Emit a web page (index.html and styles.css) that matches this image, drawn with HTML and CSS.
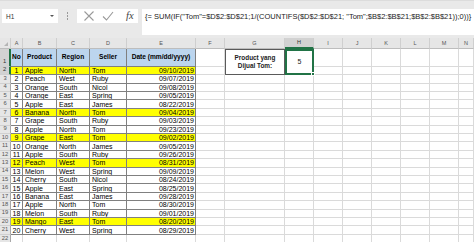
FILE: index.html
```html
<!DOCTYPE html>
<html>
<head>
<meta charset="utf-8">
<link rel="stylesheet" href="styles.css">
</head>
<body>
<div class="toolbar">
  <div class="namebox"><span>H1</span><span class="arrow"></span></div>
  <div class="sep"><span class="dot"></span><span class="dot"></span><span class="dot"></span></div>
  <div class="icons">
    <svg class="ico" width="12" height="12" viewBox="0 0 12 12"><path d="M1.5 1.5 L10.5 10.5 M10.5 1.5 L1.5 10.5" stroke="#9a9a9a" stroke-width="1.1" fill="none"/></svg>
    <svg class="ico" width="12" height="12" viewBox="0 0 12 12"><path d="M1 6.5 L4.5 10 L11 2" stroke="#9a9a9a" stroke-width="1.1" fill="none"/></svg>
    <span class="fx">fx</span>
  </div>
  <div class="formula">{= SUM(IF("Tom"=$D$2:$D$21;1/(COUNTIFS($D$2:$D$21; "Tom";$B$2:$B$21;$B$2:$B$21));0))}</div>
</div>
<div class="sheet">
  <div class="ch corner"><span class="tri"></span></div>
  <div class="ch">A</div><div class="ch">B</div><div class="ch">C</div><div class="ch">D</div><div class="ch">E</div><div class="ch">F</div><div class="ch">G</div><div class="ch sel">H</div><div class="ch">I</div><div class="ch">J</div><div class="ch">K</div><div class="ch">L</div><div class="ch">M</div><div class="ch">N</div>

  <div class="rh sel tall">1</div>
  <div class="d hd">No</div><div class="d hd">Product</div><div class="d hd">Region</div><div class="d hd">Seller</div><div class="d hd">Date (mm/dd/yyyy)</div>
  <div class="c"></div>
  <div class="lbl">Product yang<br>Dijual Tom:</div>
  <div class="selc">5<span class="handle"></span></div>
  <div class="c"></div><div class="c"></div><div class="c"></div><div class="c"></div><div class="c"></div><div class="c"></div>

  <div class="rh sel">2</div>
  <div class="d y n">1</div><div class="d y">Apple</div><div class="d y">North</div><div class="d y">Tom</div><div class="d y dt">09/10/2019</div>
  <div class="c"></div><div class="c"></div><div class="c"></div><div class="c"></div><div class="c"></div><div class="c"></div><div class="c"></div>

  <div class="rh">3</div>
  <div class="d n">2</div><div class="d">Peach</div><div class="d">West</div><div class="d">Ruby</div><div class="d dt">09/07/2019</div>
  <div class="c"></div><div class="c"></div><div class="c"></div><div class="c"></div><div class="c"></div><div class="c"></div><div class="c"></div><div class="c"></div><div class="c"></div>

  <div class="rh">4</div>
  <div class="d n">3</div><div class="d">Orange</div><div class="d">South</div><div class="d">Nicol</div><div class="d dt">09/08/2019</div>
  <div class="c"></div><div class="c"></div><div class="c"></div><div class="c"></div><div class="c"></div><div class="c"></div><div class="c"></div><div class="c"></div><div class="c"></div>

  <div class="rh">5</div>
  <div class="d n">4</div><div class="d">Orange</div><div class="d">East</div><div class="d">Spring</div><div class="d dt">09/05/2019</div>
  <div class="c"></div><div class="c"></div><div class="c"></div><div class="c"></div><div class="c"></div><div class="c"></div><div class="c"></div><div class="c"></div><div class="c"></div>

  <div class="rh">6</div>
  <div class="d n">5</div><div class="d">Apple</div><div class="d">East</div><div class="d">James</div><div class="d dt">08/22/2019</div>
  <div class="c"></div><div class="c"></div><div class="c"></div><div class="c"></div><div class="c"></div><div class="c"></div><div class="c"></div><div class="c"></div><div class="c"></div>

  <div class="rh">7</div>
  <div class="d y n">6</div><div class="d y">Banana</div><div class="d y">North</div><div class="d y">Tom</div><div class="d y dt">09/04/2019</div>
  <div class="c"></div><div class="c"></div><div class="c"></div><div class="c"></div><div class="c"></div><div class="c"></div><div class="c"></div><div class="c"></div><div class="c"></div>

  <div class="rh">8</div>
  <div class="d n">7</div><div class="d">Grape</div><div class="d">South</div><div class="d">Ruby</div><div class="d dt">09/03/2019</div>
  <div class="c"></div><div class="c"></div><div class="c"></div><div class="c"></div><div class="c"></div><div class="c"></div><div class="c"></div><div class="c"></div><div class="c"></div>

  <div class="rh">9</div>
  <div class="d n">8</div><div class="d">Apple</div><div class="d">North</div><div class="d">Tom</div><div class="d dt">09/23/2019</div>
  <div class="c"></div><div class="c"></div><div class="c"></div><div class="c"></div><div class="c"></div><div class="c"></div><div class="c"></div><div class="c"></div><div class="c"></div>

  <div class="rh">10</div>
  <div class="d y n">9</div><div class="d y">Grape</div><div class="d y">East</div><div class="d y">Tom</div><div class="d y dt">09/02/2019</div>
  <div class="c"></div><div class="c"></div><div class="c"></div><div class="c"></div><div class="c"></div><div class="c"></div><div class="c"></div><div class="c"></div><div class="c"></div>

  <div class="rh">11</div>
  <div class="d n">10</div><div class="d">Orange</div><div class="d">North</div><div class="d">James</div><div class="d dt">09/05/2019</div>
  <div class="c"></div><div class="c"></div><div class="c"></div><div class="c"></div><div class="c"></div><div class="c"></div><div class="c"></div><div class="c"></div><div class="c"></div>

  <div class="rh">12</div>
  <div class="d n">11</div><div class="d">Apple</div><div class="d">South</div><div class="d">Ruby</div><div class="d dt">09/26/2019</div>
  <div class="c"></div><div class="c"></div><div class="c"></div><div class="c"></div><div class="c"></div><div class="c"></div><div class="c"></div><div class="c"></div><div class="c"></div>

  <div class="rh">13</div>
  <div class="d y n">12</div><div class="d y">Peach</div><div class="d y">West</div><div class="d y">Tom</div><div class="d y dt">08/31/2019</div>
  <div class="c"></div><div class="c"></div><div class="c"></div><div class="c"></div><div class="c"></div><div class="c"></div><div class="c"></div><div class="c"></div><div class="c"></div>

  <div class="rh">14</div>
  <div class="d n">13</div><div class="d">Melon</div><div class="d">West</div><div class="d">Spring</div><div class="d dt">09/09/2019</div>
  <div class="c"></div><div class="c"></div><div class="c"></div><div class="c"></div><div class="c"></div><div class="c"></div><div class="c"></div><div class="c"></div><div class="c"></div>

  <div class="rh">15</div>
  <div class="d n">14</div><div class="d">Cherry</div><div class="d">South</div><div class="d">Nicol</div><div class="d dt">08/24/2019</div>
  <div class="c"></div><div class="c"></div><div class="c"></div><div class="c"></div><div class="c"></div><div class="c"></div><div class="c"></div><div class="c"></div><div class="c"></div>

  <div class="rh">16</div>
  <div class="d n">15</div><div class="d">Apple</div><div class="d">East</div><div class="d">Spring</div><div class="d dt">08/25/2019</div>
  <div class="c"></div><div class="c"></div><div class="c"></div><div class="c"></div><div class="c"></div><div class="c"></div><div class="c"></div><div class="c"></div><div class="c"></div>

  <div class="rh">17</div>
  <div class="d n">16</div><div class="d">Banana</div><div class="d">East</div><div class="d">James</div><div class="d dt">09/28/2019</div>
  <div class="c"></div><div class="c"></div><div class="c"></div><div class="c"></div><div class="c"></div><div class="c"></div><div class="c"></div><div class="c"></div><div class="c"></div>

  <div class="rh">18</div>
  <div class="d n">17</div><div class="d">Apple</div><div class="d">North</div><div class="d">Tom</div><div class="d dt">08/30/2019</div>
  <div class="c"></div><div class="c"></div><div class="c"></div><div class="c"></div><div class="c"></div><div class="c"></div><div class="c"></div><div class="c"></div><div class="c"></div>

  <div class="rh">19</div>
  <div class="d n">18</div><div class="d">Melon</div><div class="d">South</div><div class="d">Ruby</div><div class="d dt">09/01/2019</div>
  <div class="c"></div><div class="c"></div><div class="c"></div><div class="c"></div><div class="c"></div><div class="c"></div><div class="c"></div><div class="c"></div><div class="c"></div>

  <div class="rh">20</div>
  <div class="d y n">19</div><div class="d y">Mango</div><div class="d y">East</div><div class="d y">Tom</div><div class="d y dt">08/20/2019</div>
  <div class="c"></div><div class="c"></div><div class="c"></div><div class="c"></div><div class="c"></div><div class="c"></div><div class="c"></div><div class="c"></div><div class="c"></div>

  <div class="rh">21</div>
  <div class="d n">20</div><div class="d">Cherry</div><div class="d">West</div><div class="d">Spring</div><div class="d dt">08/29/2019</div>
  <div class="c"></div><div class="c"></div><div class="c"></div><div class="c"></div><div class="c"></div><div class="c"></div><div class="c"></div><div class="c"></div><div class="c"></div>

  <div class="rh">22</div>
  <div class="c"></div><div class="c"></div><div class="c"></div><div class="c"></div><div class="c"></div><div class="c"></div><div class="c"></div><div class="c"></div><div class="c"></div><div class="c"></div><div class="c"></div><div class="c"></div><div class="c"></div><div class="c"></div>
</div>
</body>
</html>
```

FILE: styles.css
```css
* { box-sizing: border-box; margin: 0; padding: 0; }
html, body { width: 474px; height: 242px; overflow: hidden; background: #fff; }
body { font-family: "Liberation Sans", Arial, sans-serif; color: #000; }

.toolbar {
  height: 38px;
  background: #e9e9e9;
  display: flex;
  align-items: flex-start;
  padding-top: 8px;
  border-top: 1px solid #dcdcdc;
}
.namebox {
  margin-left: 2px;
  width: 56px;
  height: 14px;
  background: #fff;
  display: flex;
  align-items: center;
  justify-content: space-between;
  padding: 0 4px 0 4px;
  font-size: 6.5px;
  color: #333;
}
.arrow {
  width: 0; height: 0;
  border-left: 2px solid transparent;
  border-right: 2px solid transparent;
  border-top: 2.5px solid #555;
}
.sep {
  width: 19px;
  height: 14px;
  display: flex;
  flex-direction: column;
  align-items: center;
  justify-content: center;
  gap: 1.5px;
}
.dot { width: 1px; height: 1.5px; background: #9a9a9a; display: block; }
.icons {
  width: 61px;
  height: 14px;
  background: #fff;
  display: flex;
  align-items: center;
  padding-left: 6px;
  gap: 7px;
}
.ico { display: block; }
.fx {
  font-family: "Liberation Serif", "Times New Roman", serif;
  font-style: italic;
  font-size: 10.5px;
  color: #444;
  margin-left: 5px;
  line-height: 1;
}
.formula {
  margin-left: 4px;
  flex: 1;
  height: 26px;
  background: #fff;
  padding: 3px 0 0 3px;
  font-size: 7.5px;
  line-height: 9px;
  color: #222;
  white-space: nowrap;
  overflow: hidden;
}

.sheet {
  display: grid;
  grid-template-columns: 11px 12px 34px 33px 37px 69px 29px 60px 29px 29px 29px 29px 29px 29px 15px;
  grid-template-rows: 10.5px 18.2px repeat(20, 8.415px) 10px;
}

.ch {
  background: #e6e6e6;
  border-right: 1px solid #cfcfcf;
  border-bottom: 1px solid #bdbdbd;
  font-size: 5.5px;
  color: #555;
  display: flex;
  align-items: center;
  justify-content: center;
}
.ch.sel {
  background: #d2d2d2;
  color: #333;
  border-bottom: 2px solid #217346;
}
.corner { position: relative; }
.tri {
  position: absolute;
  right: 2px;
  bottom: 2px;
  width: 0; height: 0;
  border-left: 4px solid transparent;
  border-bottom: 4px solid #b5b5b5;
}

.rh {
  background: #e6e6e6;
  border-right: 1px solid #a8a8a8;
  border-bottom: 1px solid #d0d0d0;
  font-size: 5.8px;
  color: #555;
  display: flex;
  align-items: center;
  justify-content: center;
  line-height: 1;
}
.rh.sel {
  background: #d2d2d2;
  color: #333;
  border-right: 2px solid #217346;
}
.rh.tall { align-items: flex-end; padding-bottom: 1px; }

.d {
  border-right: 1px solid #808080;
  border-bottom: 1px solid #808080;
  font-size: 7px;
  line-height: 1;
  display: flex;
  align-items: center;
  padding: 0 1px 0 2px;
  white-space: nowrap;
  overflow: hidden;
}
.hd {
  background: #bcd5ee;
  font-weight: bold;
  font-size: 6.6px;
  justify-content: center;
  padding: 0;
}
.y { background: #ffff00; }
.n { justify-content: center; padding: 0; }
.dt { justify-content: flex-end; }

.c {
  border-right: 1px solid #dadada;
  border-bottom: 1px solid #dadada;
}

.lbl {
  grid-row: span 2;
  border: 1px solid #5a5a5a;
  font-weight: bold;
  font-size: 6.4px;
  line-height: 8px;
  text-align: center;
  display: flex;
  align-items: center;
  justify-content: center;
  color: #222;
}
.selc {
  grid-row: span 2;
  border: 2px solid #217346;
  position: relative;
  display: flex;
  align-items: center;
  justify-content: center;
  font-size: 7px;
  color: #222;
}
.handle {
  position: absolute;
  right: -3px;
  bottom: -3px;
  width: 4px;
  height: 4px;
  background: #217346;
  border: 1px solid #fff;
}
```
